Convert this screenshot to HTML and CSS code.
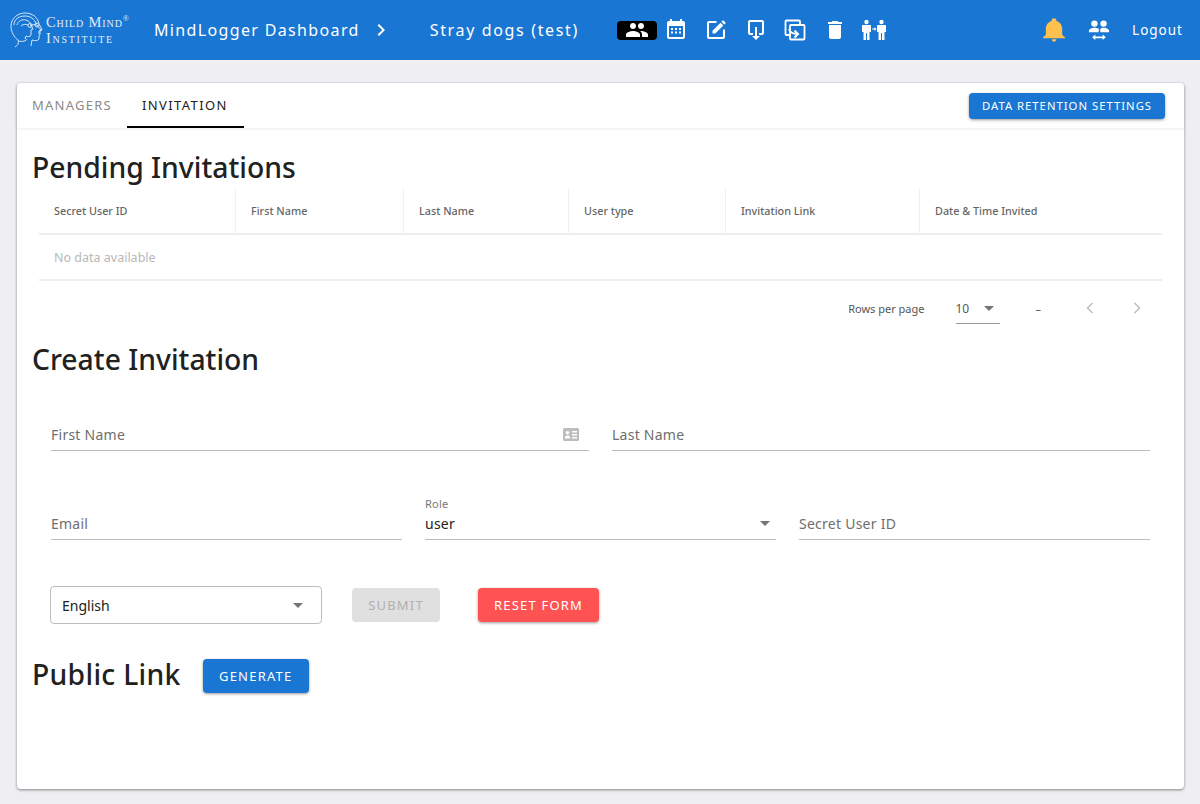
FILE: index.html
```html
<!DOCTYPE html>
<html>
<head>
<meta charset="utf-8">
<title>MindLogger Dashboard</title>
<link rel="stylesheet" href="styles.css">
</head>
<body>

<header class="topbar">
	<div class="logo">
		<svg class="logo-head" width="38" height="38" viewBox="0 0 38 38" fill="none" stroke="#d6e6f7" stroke-width="1">
			<path d="M6 36c3-2 4-4 3-7-4-3-7-8-7-14C2 7 9 2 16 2c7 0 13 4 14 11 1 2 3 5 3 6l-2 1v3l-1 2v3c-1 2-4 2-7 1l-1 6"/>
			<path d="M9 30c5 1 8 0 9-2M5 14c0-6 5-9 11-9 5 0 10 3 11 8"/>
			<path d="M8 14c1-4 5-6 9-5 3 1 5 3 5 5l2 4-2 1v5c-1 2-3 2-5 1l-1 3"/>
			<path d="M12 15c2-2 5-2 7-1M21 15c1-1 5-2 7-1l4 5-2 1v3"/>
			<circle cx="21" cy="14.500" r="2"/><circle cx="28" cy="14" r="2"/>
		</svg>
		<div class="logo-text">
			<div>Child Mind<sup>®</sup></div>
			<div class="logo-line2">Institute</div>
		</div>
	</div>
	<span class="crumb">MindLogger Dashboard</span>
	<svg class="crumb-arrow" width="24" height="24" viewBox="0 0 24 24" fill="#fff"><path d="M8.600 16.600 13.200 12 8.600 7.400 10 6l6 6-6 6z"/></svg>
	<span class="crumb crumb-applet">Stray dogs (test)</span>

	<nav class="tools">
		<span class="tool tool-on">
			<svg width="24" height="24" viewBox="0 0 24 24" fill="#fff"><path d="M16 11c1.700 0 3-1.300 3-3s-1.300-3-3-3-3 1.300-3 3 1.300 3 3 3zm-8 0c1.700 0 3-1.300 3-3S9.700 5 8 5 5 6.300 5 8s1.300 3 3 3zm0 2c-2.300 0-7 1.200-7 3.500V19h14v-2.500C15 14.200 10.300 13 8 13zm8 0h-1c1.200.8 2 2 2 3.500V19h6v-2.500c0-2.300-4.700-3.500-7-3.500z"/></svg>
		</span>
		<span class="tool">
			<svg width="24" height="24" viewBox="0 0 24 24" fill="#fff"><path d="M19 3h-1V1h-2v2H8V1H6v2H5C3.900 3 3 3.900 3 5v14c0 1.100.9 2 2 2h14c1.100 0 2-.9 2-2V5c0-1.100-.9-2-2-2zm0 16H5V8h14zM7 10h2v2H7zm4 0h2v2h-2zm4 0h2v2h-2zM7 13.500h2v2H7zm4 0h2v2h-2zm4 0h2v2h-2z"/></svg>
		</span>
		<span class="tool">
			<svg width="24" height="24" viewBox="0 0 24 24" fill="none" stroke="#fff" stroke-width="2"><path d="M12.500 4H5C4.400 4 4 4.400 4 5v14c0 .6.4 1 1 1h14c.6 0 1-.4 1-1v-7.500"/><path d="M8.500 15.500v-2.800l8-8 2.800 2.800-8 8z" fill="#fff" stroke="none"/><path d="M17.400 3.800 18.600 2.600c.3-.3.7-.3 1 0l1.800 1.800c.3.300.3.700 0 1l-1.200 1.200z" fill="#fff" stroke="none"/></svg>
		</span>
		<span class="tool">
			<svg width="24" height="24" viewBox="0 0 24 24" fill="#fff"><path d="M6 2h12c1.100 0 2 .9 2 2v11c0 1.100-.9 2-2 2h-3v-2h3V4H6v11h3v2H6c-1.100 0-2-.9-2-2V4c0-1.100.9-2 2-2zm5 7h2v9h3l-4 4-4-4h3z"/></svg>
		</span>
		<span class="tool">
			<svg width="24" height="24" viewBox="0 0 24 24" fill="none" stroke="#fff" stroke-width="1.800"><path d="M17 7V3.500c0-.6-.4-1-1-1H3.500c-.6 0-1 .4-1 1V16c0 .6.4 1 1 1H7"/><rect x="7" y="7" width="14.500" height="14.500" rx="1"/><path d="M6 11c1 3 3 5 8 5M11.500 12.500 15 16l-3.500 3.500" stroke-width="2"/></svg>
		</span>
		<span class="tool">
			<svg width="24" height="24" viewBox="0 0 24 24" fill="#fff"><path d="M6 19c0 1.100.9 2 2 2h8c1.100 0 2-.9 2-2V7H6zM19 4h-3.500l-1-1h-5l-1 1H5v2h14z"/></svg>
		</span>
		<span class="tool">
			<svg width="26" height="24" viewBox="0 0 26 24" fill="#fff"><circle cx="5.500" cy="4" r="2.200"/><path d="M2 7h7c.6 0 1 .4 1 1v6H8.500v8H6v-7H5v7H2.500v-8H1V8c0-.6.4-1 1-1z"/><circle cx="20.500" cy="4" r="2.200"/><path d="M17 7h7c.6 0 1 .4 1 1v6h-1.500v8H21v-7h-1v7h-2.500v-8H16V8c0-.6.4-1 1-1z"/><path d="M11 10.500h2.500V9l2 2-2 2v-1.500H11z"/></svg>
		</span>
	</nav>

	<div class="top-right">
		<svg class="bell" width="28" height="28" viewBox="0 0 24 24" fill="#ffc14d"><path d="M12 22c1.100 0 2-.9 2-2h-4c0 1.100.9 2 2 2zm7-6v-5c0-3.300-2-6-5-6.800V3.500C14 2.700 13.100 2 12 2s-2 .7-2 1.500v.7C7 5 5 7.700 5 11v5l-2.500 2.500V19h19v-.5z"/></svg>
		<svg class="swap" width="22" height="24" viewBox="0 0 24 24" fill="#fff"><circle cx="7" cy="5" r="3.500"/><circle cx="17" cy="5" r="3.500"/><path d="M7 9.500c-3 0-6 1.500-6 3.500v1.500h10.500c.3-1 .5-2.500.5-3.500-1-.9-3-1.500-5-1.500zm10 0c-1.500 0-3 .5-3.800 1.500.2 1 .3 2.500.3 3.500H23V13c0-2-3-3.500-6-3.500z"/><path d="M8 17v2h8v-2l3.500 3L16 23v-2H8v2l-3.500-3z"/></svg>
		<span class="logout">Logout</span>
	</div>
</header>

<main class="card">
	<div class="tabbar">
		<a class="tab">Managers</a>
		<a class="tab tab-on">Invitation</a>
		<button class="btn btn-blue btn-retention">Data Retention Settings</button>
	</div>

	<section class="content">
		<h2 class="title">Pending Invitations</h2>

		<table class="grid">
			<tr>
				<th class="c1">Secret User ID</th>
				<th class="c2">First Name</th>
				<th class="c3">Last Name</th>
				<th class="c4">User type</th>
				<th class="c5">Invitation Link</th>
				<th>Date &amp; Time Invited</th>
			</tr>
			<tr>
				<td colspan="6">No data available</td>
			</tr>
		</table>

		<div class="pager">
			<span class="pager-label">Rows per page</span>
			<span class="pager-select">10<i class="caret"></i></span>
			<span class="pager-range">–</span>
			<svg class="pager-arrow" width="24" height="24" viewBox="0 0 24 24" fill="none" stroke="#bdbdbd" stroke-width="1.500"><path d="M14.500 7 9.500 12l5 5"/></svg>
			<svg class="pager-arrow pager-next" width="24" height="24" viewBox="0 0 24 24" fill="none" stroke="#bdbdbd" stroke-width="1.500"><path d="M9.500 7l5 5-5 5"/></svg>
		</div>

		<h2 class="title title-create">Create Invitation</h2>

		<form class="invite">
			<div class="row row-two">
				<div class="field">
					<span>First Name</span>
					<svg width="16" height="13" viewBox="0 0 16 13" fill="#bdbdbd"><path fill-rule="evenodd" d="M1.500 0h13c.8 0 1.500.7 1.500 1.500v10c0 .8-.7 1.500-1.500 1.500h-13C.7 13 0 12.300 0 11.500v-10C0 .7.700 0 1.500 0zM4.500 3a1.800 1.800 0 1 0 0 3.600 1.800 1.800 0 0 0 0-3.600zM2 10.500h5V9.300C7 8.300 5.500 7.600 4.500 7.600S2 8.300 2 9.300zM9 3v1.500h5V3zm0 3v1.500h5V6zm0 3v1.500h5V9z"/></svg>
				</div>
				<div class="field"><span>Last Name</span></div>
			</div>
			<div class="row row-three">
				<div class="field"><span>Email</span></div>
				<div class="field field-role">
					<label class="small-label">Role</label>
					<span class="value">user</span>
					<i class="caret"></i>
				</div>
				<div class="field"><span>Secret User ID</span></div>
			</div>
			<div class="actions">
				<div class="lang">English<i class="caret"></i></div>
				<button type="button" class="btn btn-off">Submit</button>
				<button type="button" class="btn btn-red">Reset Form</button>
			</div>
		</form>

		<div class="public">
			<h2 class="title">Public Link</h2>
			<button class="btn btn-blue btn-generate">Generate</button>
		</div>
	</section>
</main>

</body>
</html>
```

FILE: styles.css
```css
html, body {
	margin: 0;
	padding: 0;
}

body {
	background: #eeeef3;
	font-family: "Noto Sans", Roboto, sans-serif;
	color: #212121;
	height: 804px;
	overflow: hidden;
}

/* top bar */
.topbar {
	height: 60px;
	background: #1976d2;
	color: #fff;
	display: flex;
	align-items: center;
	padding-left: 9px;
}

.logo {
	display: flex;
	align-items: center;
	width: 145px;
	flex: none;
}

.logo-head {
	flex: none;
	margin-top: -1px;
}

.logo-text {
	font-family: "Liberation Serif", serif;
	font-variant: small-caps;
	font-size: 14.500px;
	line-height: 16px;
	letter-spacing: 0.900px;
	color: #e3eefa;
	margin-left: -1px;
	white-space: nowrap;
}

.logo-line2 {
	letter-spacing: 1.700px;
}

.logo-text sup {
	font-size: 8px;
	line-height: 0;
}

.crumb {
	font-size: 16px;
	letter-spacing: 1.350px;
	white-space: nowrap;
}

.crumb-arrow {
	margin-left: 9px;
	flex: none;
}

.crumb-applet {
	margin-left: 37px;
	letter-spacing: 1.650px;
}

.tools {
	display: flex;
	align-items: center;
	margin-left: 38px;
}

.tool {
	width: 39.600px;
	height: 24px;
	display: flex;
	align-items: center;
	justify-content: center;
}

.tool-on {
	background: #000;
	border-radius: 4px;
	height: 19px;
	overflow: hidden;
}

.top-right {
	margin-left: auto;
	display: flex;
	align-items: center;
	padding-right: 17px;
}

.swap {
	margin-left: 20px;
}

.logout {
	margin-left: 22px;
	font-size: 13.500px;
	letter-spacing: 1px;
}

/* card */
.card {
	margin: 23px 16px 0 17px;
	height: 706px;
	background: #fff;
	border-radius: 4px;
	box-shadow: 0 1px 3px rgba(0, 0, 0, 0.45);
}

.tabbar {
	height: 45px;
	display: flex;
	align-items: stretch;
	box-shadow: 0 1px 3px rgba(0, 0, 0, 0.08);
}

.tab {
	box-sizing: border-box;
	padding: 0 15px;
	line-height: 44px;
	font-size: 13px;
	letter-spacing: 1.250px;
	text-transform: uppercase;
	color: #8a8a8a;
}

.tab-on {
	color: #212121;
	letter-spacing: 1.400px;
	padding-right: 16px;
	border-bottom: 2px solid #000;
}

.btn {
	border: 0;
	border-radius: 4px;
	font-family: inherit;
	font-size: 13px;
	letter-spacing: 1.200px;
	text-transform: uppercase;
	color: #fff;
	padding: 0;
	height: 34px;
	box-shadow: 0 1px 3px rgba(0, 0, 0, 0.4);
}

.btn-blue {
	background: #1976d2;
}

.btn-retention {
	width: 196px;
	height: 26px;
	margin: 10px 19px 0 auto;
	padding-bottom: 2px;
	font-size: 11.300px;
	letter-spacing: 1px;
}

.btn-generate {
	width: 106px;
	margin-left: 22px;
}

.btn-red {
	background: #ff5252;
	width: 121px;
	margin-left: 38px;
}

.btn-off {
	background: #e0e0e0;
	color: #b0b0b0;
	width: 88px;
	margin-left: 30px;
	box-shadow: none;
}

/* content */
.content {
	padding: 0 16px 0 15px;
}

.title {
	margin: 0;
	font-size: 28.300px;
	line-height: 40px;
	font-weight: 500;
	color: #212121;
}

.content > .title:first-child {
	padding-top: 19px;
}

.title-create {
	margin-top: 2px;
}

/* table */
.grid {
	margin: 1px 5px 0 7px;
	width: 1123px;
	border-collapse: collapse;
	table-layout: fixed;
	font-size: 10.800px;
}

.grid th {
	height: 45px;
	padding: 0 0 0 15px;
	text-align: left;
	font-weight: 500;
	color: #666;
	border-right: 1px solid #f0f0f0;
	border-bottom: 2px solid #eee;
}

.grid th:last-child {
	border-right: 0;
}

.grid td {
	height: 44px;
	padding: 0 0 0 15px;
	font-size: 12.500px;
	color: #b8b8b8;
	border-bottom: 2px solid #eee;
}

.c1 { width: 181px; }
.c2 { width: 152px; }
.c3 { width: 149px; }
.c4 { width: 141px; }
.c5 { width: 178px; }

/* pagination */
.pager {
	height: 56px;
	display: flex;
	align-items: center;
	font-size: 11px;
	color: #555;
	padding-right: 26px;
	margin-right: -7px;
	justify-content: flex-end;
}

.pager-label {
	margin-top: -2px;
}

.pager-select {
	box-sizing: border-box;
	width: 44px;
	height: 30px;
	margin-left: 31px;
	padding-top: 6px;
	font-size: 12px;
	border-bottom: 1px solid #999;
	position: relative;
}

.pager-select .caret {
	position: absolute;
	right: 6px;
	top: 12px;
}

.pager-range {
	margin-left: 36px;
	margin-right: 37px;
	margin-top: -2px;
}

.pager-arrow {
	margin-top: -2px;
}

.pager-next {
	margin-left: 23px;
}

.caret {
	display: inline-block;
	width: 0;
	height: 0;
	border-left: 5px solid transparent;
	border-right: 5px solid transparent;
	border-top: 5px solid #757575;
}

/* form */
.invite {
	margin-top: 19px;
	padding: 0 18px 0 19px;
}

.row {
	display: grid;
	gap: 23px;
}

.row-two {
	grid-template-columns: 1fr 1fr;
	height: 53px;
}

.row-three {
	grid-template-columns: 1fr 1fr 1fr;
	height: 53px;
	margin-top: 36px;
}

.field {
	position: relative;
	display: flex;
	align-items: flex-end;
	justify-content: space-between;
	box-sizing: border-box;
	padding-bottom: 6px;
	border-bottom: 1px solid #bdbdbd;
	font-size: 14px;
	letter-spacing: 0.250px;
	color: #6e6e6e;
	height: 53px;
}

.field svg {
	margin: 0 10px 3px 0;
}

.field-role {
	color: #212121;
}

.small-label {
	position: absolute;
	left: 0;
	top: 9px;
	font-size: 11px;
	color: #777;
}

.field-role .caret {
	margin: 0 6px 7px 0;
}

.actions {
	display: flex;
	align-items: center;
	margin-top: 46px;
	margin-left: -1px;
	height: 38px;
}

.lang {
	box-sizing: border-box;
	width: 272px;
	height: 38px;
	border: 1px solid #bdbdbd;
	border-radius: 4px;
	padding: 0 11px;
	display: flex;
	align-items: center;
	justify-content: space-between;
	font-size: 14px;
}

.lang .caret {
	margin-right: 7px;
}

.public {
	display: flex;
	align-items: center;
	margin-top: 32px;
	height: 40px;
}

.public .title {
	margin-top: -4px;
	letter-spacing: 0.300px;
}
```
